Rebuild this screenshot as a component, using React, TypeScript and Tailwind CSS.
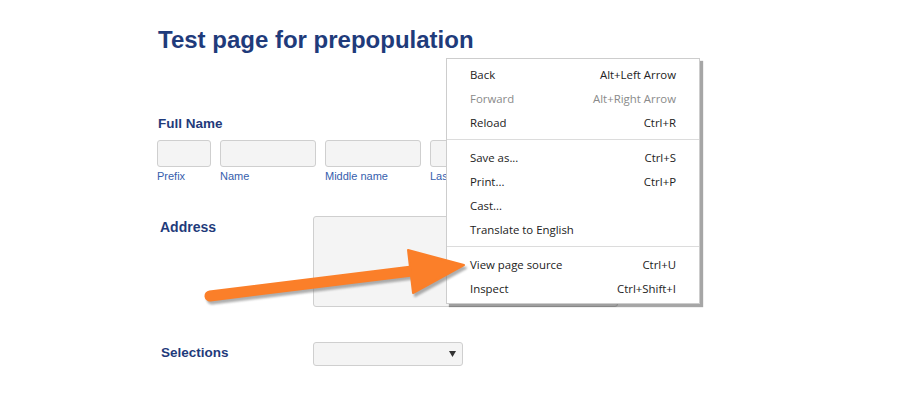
import React from 'react';

const heading = 'font-["Liberation_Sans",Arial,sans-serif] font-bold text-[#1f3b7b]';

function Box({ w, h }: { w: string; h: string }) {
    return <div className={`${w} ${h} rounded-[3px] border border-[#cfcfcf] bg-[#f4f4f4]`} />;
}

function NamePart({ label, w }: { label: string; w: string }) {
    return (
        <div className="flex flex-col">
            <Box w={w} h="h-[27px]" />
            <span className="mt-[3px] whitespace-nowrap text-[11px] leading-[13px] text-[#3660ad]">{label}</span>
        </div>
    );
}

const items: { label: string; keys?: string; off?: boolean }[][] = [
    [
        { label: 'Back', keys: 'Alt+Left Arrow' },
        { label: 'Forward', keys: 'Alt+Right Arrow', off: true },
        { label: 'Reload', keys: 'Ctrl+R' },
    ],
    [
        { label: 'Save as...', keys: 'Ctrl+S' },
        { label: 'Print...', keys: 'Ctrl+P' },
        { label: 'Cast...' },
        { label: 'Translate to English' },
    ],
    [
        { label: 'View page source', keys: 'Ctrl+U' },
        { label: 'Inspect', keys: 'Ctrl+Shift+I' },
    ],
];

function ContextMenu() {
    return (
        <div className='absolute left-[446px] top-[58px] w-[254px] border border-[#cdcdcd] bg-white pt-1 pb-[2px] font-["Open_Sans","Noto_Sans",sans-serif] text-[11.4px] text-[#222] shadow-[3px_3px_1px_rgba(0,0,0,0.35)]'>
            {items.map((group, gi) => (
                <div key={gi}>
                    {gi > 0 && <div className="mt-1 mb-[6px] h-px bg-[#dcdcdc]" />}
                    {group.map((it) => (
                        <div
                            key={it.label}
                            className={`flex h-6 items-center justify-between pl-[23px] pr-[23px] ${it.off ? 'text-[#8a8a8a]' : ''}`}
                        >
                            <span>{it.label}</span>
                            {it.keys && <span>{it.keys}</span>}
                        </div>
                    ))}
                </div>
            ))}
        </div>
    );
}

function Arrow() {
    return (
        <svg className="pointer-events-none absolute left-0 top-0" width="917" height="395" viewBox="0 0 917 395">
            <defs>
                <filter id="blur" x="-10%" y="-10%" width="120%" height="140%">
                    <feGaussianBlur stdDeviation="1" />
                </filter>
            </defs>
            <g transform="translate(2 3)" fill="#7a7a7a" stroke="#7a7a7a" opacity="0.6" filter="url(#blur)">
                <line x1="210" y1="296" x2="412" y2="271" strokeWidth="11" strokeLinecap="round" />
                <polygon points="408,250 413,293 464,265" strokeWidth="2" strokeLinejoin="round" />
            </g>
            <g fill="#fb7f29" stroke="#fb7f29">
                <line x1="210" y1="296" x2="412" y2="271" strokeWidth="11" strokeLinecap="round" />
                <polygon points="408,250 413,293 464,265" strokeWidth="2" strokeLinejoin="round" />
            </g>
        </svg>
    );
}

export default function App() {
    return (
        <div className='relative h-[395px] w-[917px] overflow-hidden bg-white font-["Liberation_Sans",Arial,sans-serif]'>
            <div className="pl-[157px] pt-[26px]">
                <h1 className={`${heading} text-[24px] leading-[28px] pl-px`}>Test page for prepopulation</h1>

                <h2 className={`${heading} mt-[62px] pl-px text-[13.5px] leading-4`}>Full Name</h2>
                <div className="mt-[8px] flex gap-[9px]">
                    <NamePart label="Prefix" w="w-[54px]" />
                    <NamePart label="Name" w="w-[96px]" />
                    <NamePart label="Middle name" w="w-[96px]" />
                    <NamePart label="Last name" w="w-[96px]" />
                </div>

                <div className="mt-[33px] flex">
                    <div className={`${heading} w-[156px] pl-[3px] pt-[3px] text-[14px] leading-4`}>Address</div>
                    <div className="relative">
                        <Box w="w-[305px]" h="h-[91px]" />
                        <svg className="absolute bottom-[2px] right-[2px]" width="8" height="8" viewBox="0 0 8 8">
                            <path d="M7 2 L2 7 M7 5 L5 7" stroke="#888" strokeWidth="1" />
                        </svg>
                    </div>
                </div>

                <div className="mt-[35px] flex">
                    <div className={`${heading} w-[156px] pl-[4px] pt-[3px] text-[13.5px] leading-4`}>Selections</div>
                    <div className="flex h-[24px] w-[150px] items-center justify-end rounded-[3px] border border-[#cfcfcf] bg-[#f4f4f4] pr-[6px]">
                        <svg width="7" height="6" viewBox="0 0 7 6">
                            <path d="M0 0 H7 L3.5 6 Z" fill="#333" />
                        </svg>
                    </div>
                </div>
            </div>

            <ContextMenu />
            <Arrow />
        </div>
    );
}
